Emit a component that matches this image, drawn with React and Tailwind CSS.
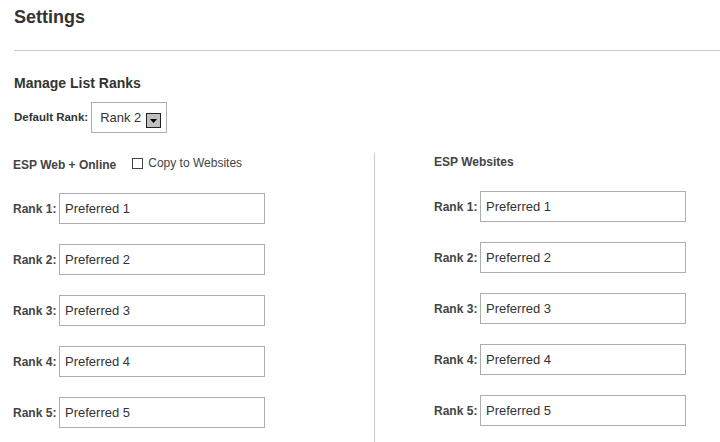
import React from "react";

function RankRow({ n }) {
  return (
    <div className="flex items-center h-[31px]">
      <span className="w-[46px] text-[12px] font-bold text-[#444] leading-none">Rank {n}:</span>
      <input
        readOnly
        value={`Preferred ${n}`}
        className="w-[206px] h-[31px] border border-[#adadad] px-[5px] text-[13px] text-[#333] bg-white outline-none"
      />
    </div>
  );
}

export default function App() {
  const ranks = [1, 2, 3, 4, 5];
  return (
    <div className="w-[720px] h-[442px] overflow-hidden bg-white font-['Liberation_Sans',Arial,sans-serif] text-[#333]">
      <div className="pt-[8px] pl-[14px] h-[50px]">
        <h1 className="text-[18px] leading-[18px] font-bold text-[#333]">Settings</h1>
      </div>
      <div className="ml-[14px] border-t border-[#cccccc]" />
      <div className="pl-[14px] pt-[25px]">
        <h2 className="text-[14px] leading-[14px] font-bold text-[#333]">Manage List Ranks</h2>
      </div>
      <div className="flex items-center pl-[14px] mt-[12px] h-[31px]">
        <span className="text-[11.5px] font-bold text-[#333] leading-none">Default Rank:</span>
        <div className="ml-[3px] w-[76px] h-[31px] border border-[#adadad] bg-white flex items-center pl-[8px] pr-[5px]">
          <span className="text-[13px] text-[#333] leading-none">Rank 2</span>
          <span className="ml-auto mt-[6px] w-[15px] h-[15px] border border-[#222] bg-[#c0c0c0] flex items-center justify-center">
            <svg width="7" height="4" viewBox="0 0 7 4">
              <path d="M0 0H7L3.5 4Z" fill="#000" />
            </svg>
          </span>
        </div>
      </div>
      <div className="flex mt-[20px]">
        <div className="w-[374px] pl-[13px]">
          <div className="h-[23px] flex items-center">
            <span className="text-[12px] font-bold text-[#444] leading-none">ESP Web + Online</span>
            <span className="ml-[16px] -mt-[3px] flex items-center">
              <span className="w-[11px] h-[11px] border border-[#444] bg-white" />
              <span className="ml-[5px] text-[12px] text-[#444] leading-none">Copy to Websites</span>
            </span>
          </div>
          <div className="mt-[17px] flex flex-col gap-[20px]">
            {ranks.map((n) => (
              <RankRow key={n} n={n} />
            ))}
          </div>
        </div>
        <div className="flex-1 border-l border-[#cccccc] pl-[59px] h-[289px]">
          <div className="h-[17px] flex items-center">
            <span className="text-[12px] font-bold text-[#444] leading-none">ESP Websites</span>
          </div>
          <div className="mt-[21px] flex flex-col gap-[20px]">
            {ranks.map((n) => (
              <RankRow key={n} n={n} />
            ))}
          </div>
        </div>
      </div>
    </div>
  );
}
